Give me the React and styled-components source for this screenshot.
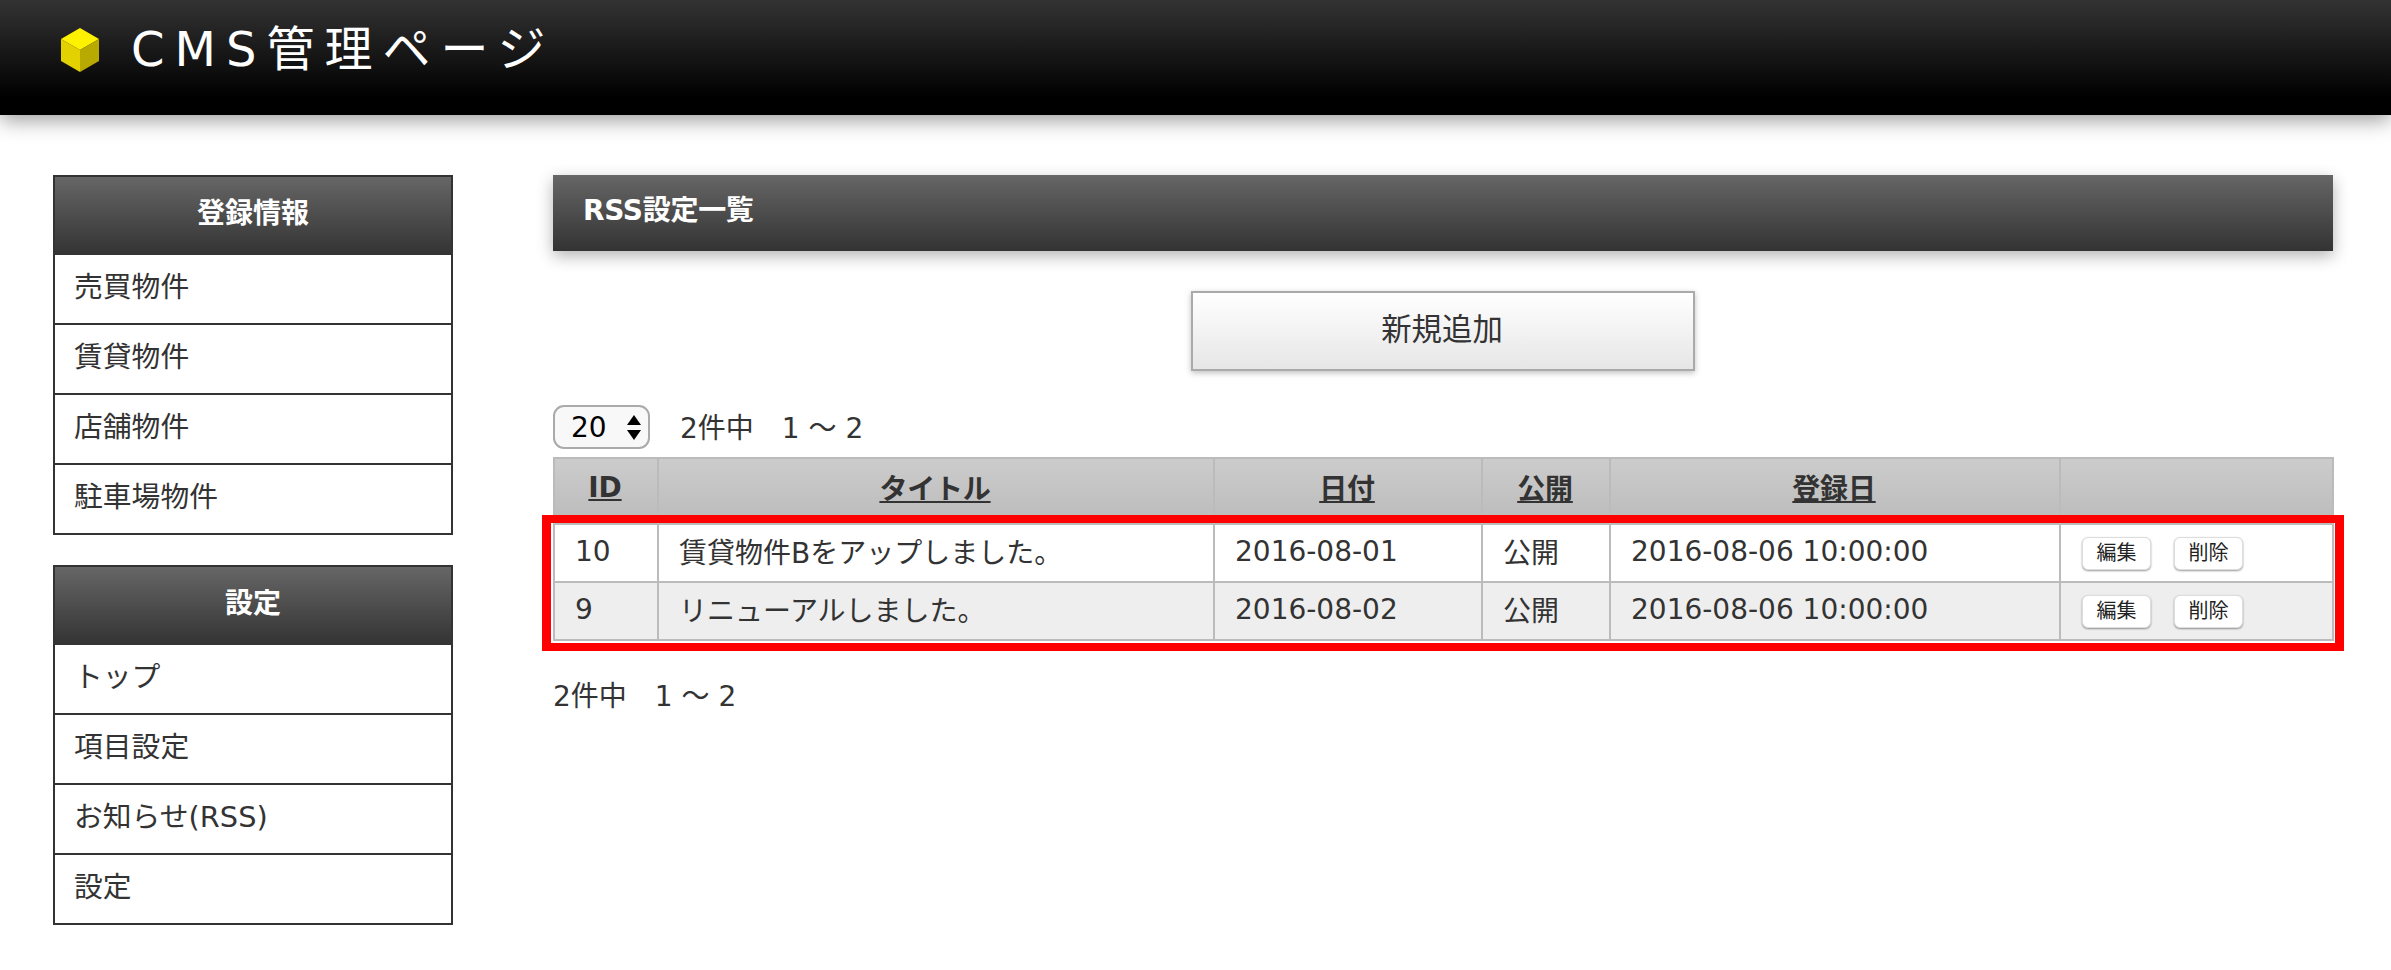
import React from "react";
import styled, { createGlobalStyle } from "styled-components";

const FONT = `"DejaVu Sans", "Noto Sans CJK JP", sans-serif`;

const Global = createGlobalStyle`
  html, body { margin: 0; padding: 0; background: #fff; }
  body { font-family: ${FONT}; color: #333; font-size: 28px; }
  * { box-sizing: border-box; }
`;

const TopBar = styled.header`
  height: 115px;
  display: flex;
  align-items: flex-start;
  padding: 27px 0 0 60px;
  gap: 31px;
  background: linear-gradient(#333 0%, #000 85%);
  box-shadow: 0 5px 20px rgba(0, 0, 0, 0.4);
`;

const Brand = styled.h1`
  margin: 0;
  font-size: 48px;
  line-height: 44px;
  font-weight: 400;
  letter-spacing: 10px;
  color: #fff;
`;

const CubeIcon = styled.svg`
  flex: none;
  margin-top: 1px;
  filter: blur(0.5px);
`;

const Page = styled.div`
  display: flex;
  gap: 100px;
  padding: 60px 58px 0 53px;
`;

const Sidebar = styled.nav`
  width: 400px;
  flex: none;
  display: flex;
  flex-direction: column;
  gap: 30px;
`;

const MenuBox = styled.section`
  border: 2px solid #333;
`;

const MenuHead = styled.h2`
  margin: 0;
  height: 78px;
  display: flex;
  align-items: center;
  justify-content: center;
  padding-bottom: 11px;
  font-size: 28px;
  font-weight: 700;
  color: #fff;
  background: linear-gradient(#666, #333);
`;

const MenuItem = styled.a`
  display: block;
  height: 70px;
  padding: 0 19px;
  line-height: 64px;
  font-size: 28.8px;
  color: #333;
  border-bottom: 2px solid #333;
  &:last-child { height: 68px; border-bottom: 0; }
`;

const Main = styled.main`
  flex: 1;
  min-width: 0;
`;

const TitleBar = styled.h2`
  margin: 0;
  height: 76px;
  padding: 0 30px 11px;
  display: flex;
  align-items: center;
  font-size: 28px;
  font-weight: 700;
  letter-spacing: -0.3px;
  color: #fff;
  background: linear-gradient(#666, #333);
  box-shadow: 0 5px 15px rgba(0, 0, 0, 0.3);
`;

const ButtonRow = styled.div`
  display: flex;
  justify-content: center;
  margin-top: 40px;
`;

const AddButton = styled.button`
  width: 504px;
  height: 80px;
  padding: 0 2px 9px 0;
  font-family: ${FONT};
  font-size: 30.4px;
  color: #333;
  background: linear-gradient(#fff, #e6e6e6);
  border: 2px solid #aaa;
  box-shadow: 0 2px 6px rgba(0, 0, 0, 0.25);
`;

const PagerRow = styled.div`
  display: flex;
  align-items: center;
  gap: 30px;
  margin-top: 34px;
  height: 44px;
`;

const SelectWrap = styled.span`
  position: relative;
  display: block;
  width: 97px;
  height: 44px;
`;

const Select = styled.select`
  appearance: none;
  width: 100%;
  height: 100%;
  padding: 0 0 0 16px;
  font-family: ${FONT};
  font-size: 28px;
  color: #000;
  background: #f8f8f8;
  border: 2px solid #aaa;
  border-radius: 11px;
`;

const SelectArrows = styled.svg`
  position: absolute;
  right: 9px;
  top: 10px;
  width: 14px;
  height: 25px;
  pointer-events: none;
`;

const PagerText = styled.span`
  position: relative;
  top: -1px;
  font-size: 28px;
  white-space: pre;
  color: #333;
`;

const TableWrap = styled.div`
  position: relative;
  margin-top: 8px;
`;

const Table = styled.table`
  width: calc(100% - 1px);
  table-layout: fixed;
  border-collapse: collapse;
  border: 2px solid #bbb;
`;

const Head = styled.th`
  height: 66px;
  padding: 0 2px 8px 0;
  font-size: 28px;
  font-weight: 700;
  letter-spacing: -0.2px;
  color: #333;
  text-decoration: underline;
  background: linear-gradient(#ccc, #bbb);
  border: 2px solid #bbb;
`;

const Row = styled.tr`
  background: ${(p) => (p.$alt ? "#eee" : "#fff")};
`;

const Cell = styled.td`
  height: 58px;
  padding: 0 20px 4px;
  font-size: 28px;
  color: #333;
  white-space: nowrap;
  border: 2px solid #bbb;
`;

const ActionCell = styled(Cell)`
  padding: 0 0 0 21px;
`;

const Actions = styled.div`
  display: flex;
  gap: 23px;
`;

const SmallButton = styled.button`
  width: 69px;
  height: 33px;
  padding: 0;
  font-family: ${FONT};
  font-size: 20px;
  line-height: 1;
  color: #222;
  background: #fff;
  border: 1px solid #ddd;
  border-radius: 6px;
  box-shadow: 0 1px 2px rgba(0, 0, 0, 0.4);
`;

const Highlight = styled.div`
  position: absolute;
  left: -11px;
  right: -11px;
  top: 58px;
  bottom: -10px;
  border-style: solid;
  border-color: #f00;
  border-width: 8px 9px;
  pointer-events: none;
`;

const FootPager = styled.div`
  margin-top: 34px;
`;

const menus = [
  { title: "登録情報", items: ["売買物件", "賃貸物件", "店舗物件", "駐車場物件"] },
  { title: "設定", items: ["トップ", "項目設定", "お知らせ(RSS)", "設定"] },
];

const columns = [
  { label: "ID", width: 104 },
  { label: "タイトル", width: 556 },
  { label: "日付", width: 268 },
  { label: "公開", width: 128 },
  { label: "登録日", width: 450 },
  { label: "", width: 273 },
];

const rows = [
  { id: 10, title: "賃貸物件Bをアップしました。", date: "2016-08-01", pub: "公開", created: "2016-08-06 10:00:00" },
  { id: 9, title: "リニューアルしました。", date: "2016-08-02", pub: "公開", created: "2016-08-06 10:00:00" },
];

const Cube = () => (
  <CubeIcon width="40" height="44" viewBox="0 0 40 44">
    <polygon points="20,0 39,11 20,22 1,11" fill="#fff200" />
    <polygon points="1,11 20,22 20,44 1,33" fill="#e3d200" />
    <polygon points="39,11 20,22 20,44 39,33" fill="#b8aa00" />
  </CubeIcon>
);

export default function App() {
  return (
    <>
      <Global />
      <TopBar>
        <Cube />
        <Brand>CMS管理ページ</Brand>
      </TopBar>
      <Page>
        <Sidebar>
          {menus.map((m) => (
            <MenuBox key={m.title}>
              <MenuHead>{m.title}</MenuHead>
              {m.items.map((i) => (
                <MenuItem key={i}>{i}</MenuItem>
              ))}
            </MenuBox>
          ))}
        </Sidebar>
        <Main>
          <TitleBar>RSS設定一覧</TitleBar>
          <ButtonRow>
            <AddButton>新規追加</AddButton>
          </ButtonRow>
          <PagerRow>
            <SelectWrap>
              <Select defaultValue="20">
                <option value="20">20</option>
                <option value="50">50</option>
              </Select>
              <SelectArrows viewBox="0 0 14 25">
                <polygon points="7,0 14,10 0,10" fill="#000" />
                <polygon points="7,25 14,15 0,15" fill="#000" />
              </SelectArrows>
            </SelectWrap>
            <PagerText>2件中　1 〜 2</PagerText>
          </PagerRow>
          <TableWrap>
            <Table>
              <colgroup>
                {columns.map((c, i) => (
                  <col key={i} style={{ width: c.width }} />
                ))}
              </colgroup>
              <thead>
                <tr>
                  {columns.map((c, i) => (
                    <Head key={i}>{c.label}</Head>
                  ))}
                </tr>
              </thead>
              <tbody>
                {rows.map((r, i) => (
                  <Row key={r.id} $alt={i % 2 === 1}>
                    <Cell>{r.id}</Cell>
                    <Cell>{r.title}</Cell>
                    <Cell>{r.date}</Cell>
                    <Cell>{r.pub}</Cell>
                    <Cell>{r.created}</Cell>
                    <ActionCell>
                      <Actions>
                        <SmallButton>編集</SmallButton>
                        <SmallButton>削除</SmallButton>
                      </Actions>
                    </ActionCell>
                  </Row>
                ))}
              </tbody>
            </Table>
            <Highlight />
          </TableWrap>
          <FootPager>
            <PagerText>2件中　1 〜 2</PagerText>
          </FootPager>
        </Main>
      </Page>
    </>
  );
}
